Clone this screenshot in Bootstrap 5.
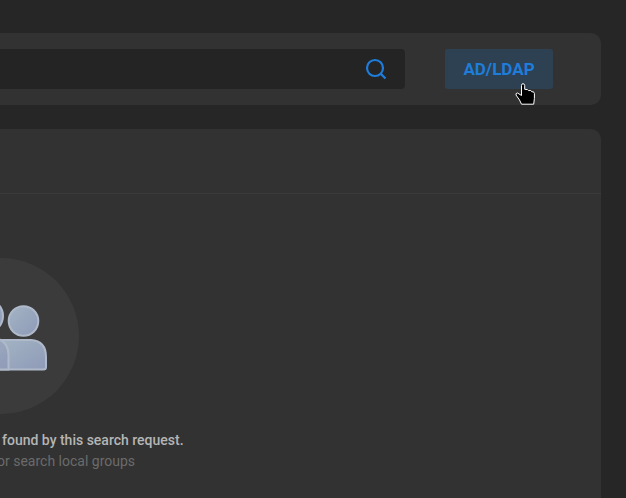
<!DOCTYPE html>
<html lang="en" data-bs-theme="dark">
<head>
<meta charset="utf-8">
<meta name="viewport" content="width=device-width, initial-scale=1">
<title>Groups</title>
<link rel="stylesheet" href="https://cdn.jsdelivr.net/npm/bootstrap@5.3.0/dist/css/bootstrap.min.css">
<style>
body{background:#262626;font-family:Roboto,sans-serif;font-size:14px;line-height:21px;overflow:hidden}
.page{min-height:100vh;padding:33px 25px 0 0;gap:24px}
.panel{background:#323232}
.toolbar{border-radius:0 10px 10px 0;padding:16px 48px 16px 0;gap:40px}
.search{background:#242424;border-radius:0 4px 4px 0;height:40px;padding-right:18px}
.search .form-control{background:transparent;color:#bbb;font-size:14px}
.ldap{width:108px;height:40px;border-radius:3px;--bs-btn-padding-x:0;--bs-btn-padding-y:0;--bs-btn-line-height:26px;--bs-btn-font-size:17px;--bs-btn-font-weight:700;--bs-btn-color:#1e7ddb;--bs-btn-bg:#2e4152;--bs-btn-hover-color:#1e7ddb;--bs-btn-hover-bg:#2e4152}
.pointer{left:70px;top:32px;pointer-events:none}
.results{border-radius:0 10px 0 0}
.results-head{height:65px;border-bottom:1px solid #3b3b3b}
.empty{padding-top:64px}
.empty-title{color:#b5b5b5;font-weight:500;margin-top:16px;padding-left:2px}
.empty-hint{color:#6b6b6b;margin-left:-3px}
</style>
<script src="https://cdn.jsdelivr.net/npm/bootstrap@5.3.0/dist/js/bootstrap.bundle.min.js"></script>
</head>
<body>
<main class="page d-flex flex-column">
  <form class="panel toolbar d-flex align-items-center">
    <div class="search d-flex align-items-center flex-grow-1">
      <input type="search" class="form-control border-0 shadow-none" aria-label="Search groups">
      <button type="button" class="btn p-0 border-0 d-flex" aria-label="Search">
        <svg width="22" height="22" viewBox="0 0 22 22" fill="none" stroke="#1e7ddb" stroke-width="2.2"><circle cx="10" cy="10" r="8"/><path d="M15.6 15.6 20.5 20.5"/></svg>
      </button>
    </div>
    <div class="position-relative">
      <button type="button" class="btn ldap border-0">AD/LDAP</button>
      <svg class="pointer position-absolute" width="22" height="24" viewBox="0 0 22 24" aria-hidden="true"><path d="M6.5 23.2 4.5 19 1 14Q0.6 12 2.5 12L6.5 14.5V4.5Q6.5 2.7 8 2.7T9.7 4.5V8.3L12.5 8.6 13.5 9.6 15.8 9.5 16.8 10.8 18.5 10.8 19.4 12.5V17.5L18.7 23.2Z" fill="#000" stroke="#fff" stroke-linejoin="round"/></svg>
    </div>
  </form>
  <section class="panel results flex-grow-1">
    <div class="results-head"></div>
    <div class="empty">
      <svg class="d-block" width="80" height="156" viewBox="0 0 80 156" aria-hidden="true">
        <defs><linearGradient id="person" x1="0" y1="0" x2="1" y2="1"><stop offset="0" stop-color="#a3b4c3"/><stop offset="1" stop-color="#8f9ab8"/></linearGradient></defs>
        <circle cx="1" cy="78" r="78" fill="#3b3b3b"/>
        <g fill="url(#person)" stroke="#afb9ca" stroke-width="2">
          <circle cx="23.5" cy="63" r="14.8"/>
          <path d="M0 111.5V82H31Q46 83 46 99V109Q46 111.5 43.5 111.5Z"/>
          <circle cx="-13.5" cy="58" r="16.5"/>
          <path d="M-36 111.5V79H-8Q8.5 82 8.5 97V111.5Z"/>
        </g>
      </svg>
      <div class="empty-title text-nowrap">found by this search request.</div>
      <div class="empty-hint text-nowrap">or search local groups</div>
    </div>
  </section>
</main>
</body>
</html>
